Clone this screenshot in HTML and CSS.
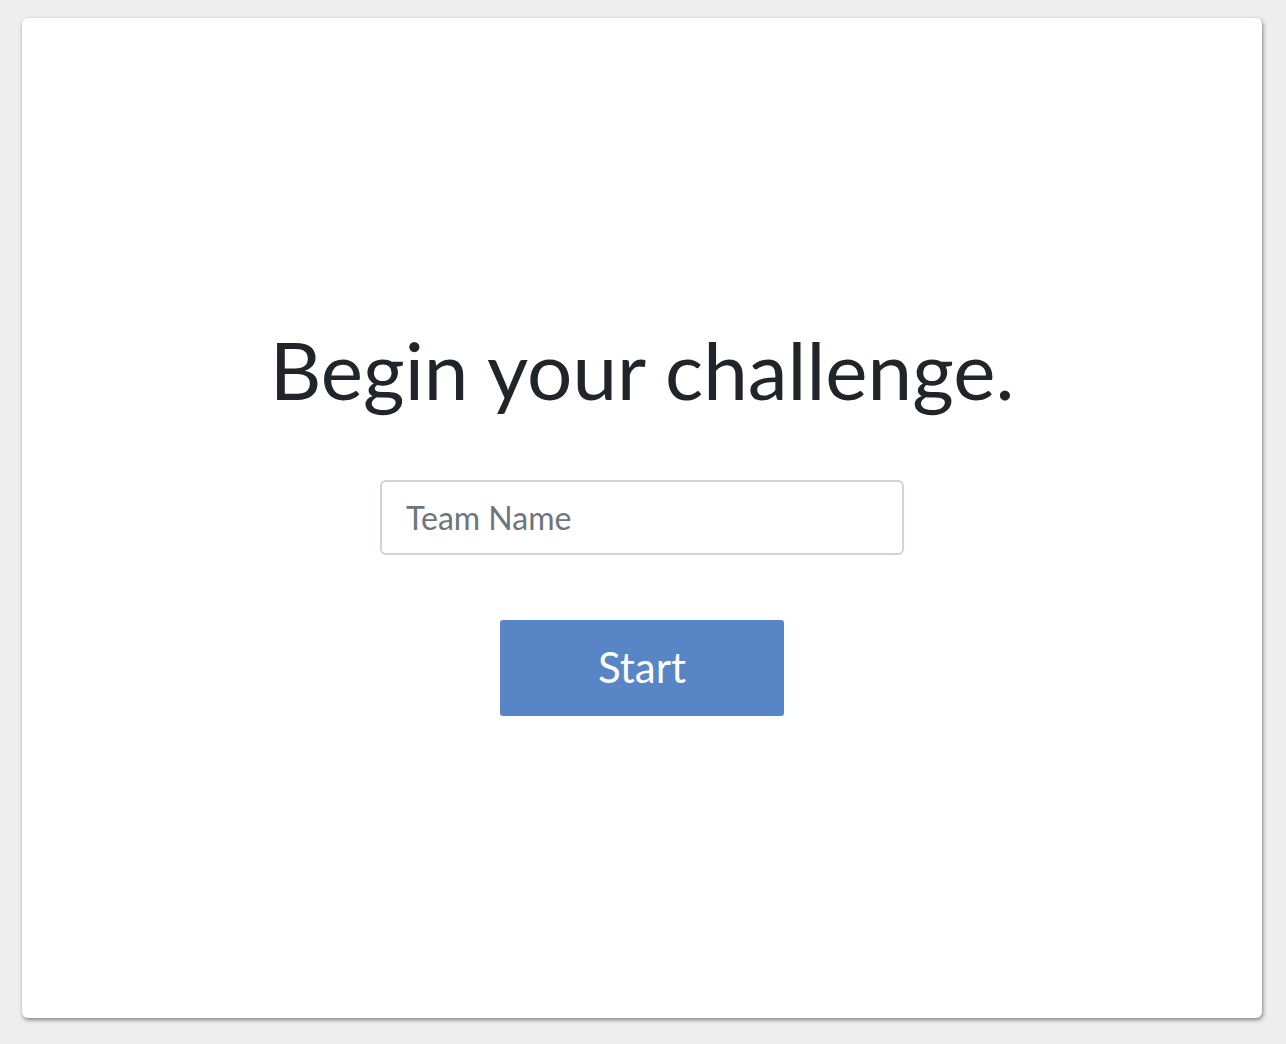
FILE: index.html
```html
<!DOCTYPE html>
<html lang="en">
<head>
<meta charset="utf-8">
<title>Begin your challenge</title>
<link rel="stylesheet" href="styles.css">
</head>
<body>
<main class="card">
  <h1 class="title">Begin your challenge.</h1>
  <form class="form">
    <input class="team-input" type="text" placeholder="Team Name">
    <button class="start-btn" type="button">Start</button>
  </form>
</main>
</body>
</html>
```

FILE: styles.css
```css
html, body {
  margin: 0;
  padding: 0;
}
body {
  background: #eeeeee;
  padding: 18px 24px 26px 22px;
  font-family: Lato, "Liberation Sans", sans-serif;
  color: #212529;
}
.card {
  box-sizing: border-box;
  width: 1240px;
  height: 1000px;
  background: #ffffff;
  border-radius: 6px;
  box-shadow: 1px 2px 4px rgba(0, 0, 0, 0.45);
  display: flex;
  flex-direction: column;
  align-items: center;
  justify-content: center;
  padding-top: 6px;
  padding-bottom: 6px;
}
.title {
  margin: 0;
  font-size: 80px;
  font-weight: 400;
  line-height: 96px;
  color: #212529;
}
.form {
  display: flex;
  flex-direction: column;
  align-items: center;
  margin-top: 63px;
}
.team-input {
  box-sizing: border-box;
  width: 524px;
  height: 75px;
  border: 2px solid #ced4da;
  border-radius: 6px;
  padding: 0 24px;
  font-family: Lato, "Liberation Sans", sans-serif;
  font-size: 32px;
  color: #495057;
  outline: none;
}
.team-input::placeholder {
  color: #6c757d;
  opacity: 1;
}
.start-btn {
  margin-top: 65px;
  width: 284px;
  height: 96px;
  border: none;
  border-radius: 3px;
  background: #5785c6;
  color: #ffffff;
  font-family: Lato, "Liberation Sans", sans-serif;
  font-size: 42px;
  font-weight: 400;
  padding: 0 0 2px;
}
```
